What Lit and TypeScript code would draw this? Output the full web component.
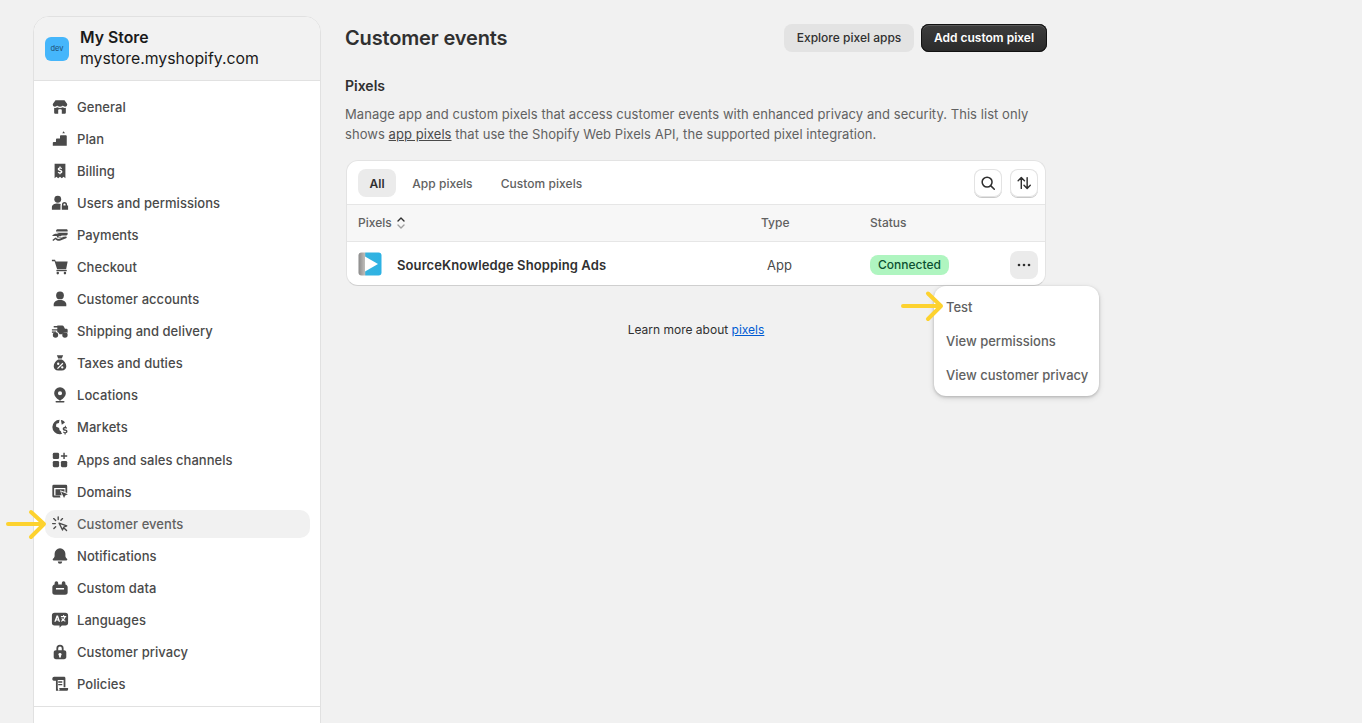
import { LitElement, html, css, svg } from "lit";
import { customElement } from "lit/decorators.js";

const icons: Record<string, any> = {
  General: svg`<path d="M5 2.500h10l3 4.200c.3 1.600-.8 3-2.400 3-1 0-1.900-.5-2.400-1.300-.5.8-1.300 1.300-3.200 1.300s-2.700-.5-3.200-1.300c-.5.8-1.400 1.300-2.400 1.300-1.600 0-2.700-1.400-2.400-3z"/><path fill-rule="evenodd" d="M3.500 10.800c1.200.4 2.500.2 3.300-.4 1.800 1 4.600 1 6.400 0 .8.6 2.100.8 3.300.4V16c0 .9-.6 1.500-1.500 1.500H5c-.9 0-1.500-.6-1.500-1.500zm4.500 2.700v4h4v-4c0-.6-.4-1-1-1H9c-.6 0-1 .4-1 1z"/>`,
  Plan: svg`<path d="M14 1.500l1.500 2h-3zM2 17.500v-3.300c0-.6.4-1 1-1h2.500v-2.700c0-.6.4-1 1-1h3.500V6.800c0-.6.4-1 1-1h5.500c.6 0 1 .4 1 1V17.500z"/>`,
  Billing: svg`<path fill-rule="evenodd" d="M4 2h12v16l-2-1.500-2 1.500-2-1.500L8 18l-2-1.500L4 18zM9.300 5v1c-1 .2-1.800.9-1.800 1.900 0 1.100.9 1.700 2.100 2 1 .2 1.300.5 1.300.9s-.5.7-1.100.7c-.7 0-1.200-.3-1.500-.7l-.9.800c.4.600 1.100 1 1.900 1.100v1h1.400v-1c1.100-.2 1.900-.9 1.900-2 0-1.200-1-1.800-2.300-2.100-.9-.2-1.100-.4-1.100-.7 0-.4.400-.6 1-.6.5 0 1 .2 1.300.6l.9-.8c-.4-.5-1-.9-1.700-1V5z"/>`,
  "Users and permissions": svg`<circle cx="7.500" cy="5.800" r="3.800"/><path d="M1 17.500v-2.500c0-3 2.500-4.500 6.500-4.500 1.300 0 2.400.2 3.300.6-.2.500-.3.900-.3 1.400v5z"/><path fill-rule="evenodd" d="M15 9a2.800 2.800 0 0 0-2.800 2.800v1H12v4.700h7v-4.700h-1.200v-1A2.800 2.800 0 0 0 15 9zm-1.200 3.800v-1a1.200 1.200 0 0 1 2.400 0v1z"/>`,
  Payments: svg`<path d="M7 3.500h10c.8 0 1.500.6 1.500 1.300V6H5.500c.1-1.300.6-2.500 1.500-2.500zM6 7.500h12.500v1.500c0 .8-.6 1.500-1.500 1.500h-5zM1.500 10.500c1.200-1.300 3-2 5-1.800l4.500.6c1.300.2 1.300 2-.2 2H8.500v1h3.500l4.500-.5c1.300 0 1.400 1.500.3 1.900l-6.300 2.400c-1.500.5-3 .4-4.200-.4l-1.300-.9-2.500 2-1-1.200 3.500-2.800 1.700 1.200c.8.5 1.600.6 2.600.3l4.500-1.700-3.800.3H6.500v-1.700H1.500z"/>`,
  Checkout: svg`<path d="M1 2h3.500l.8 2h13.200l-1.700 8.500H6.800L4 3.500H1z"/><path d="M6 13.200h11.500v1.500H6z"/><circle cx="7.500" cy="16.800" r="1.400"/><circle cx="15.500" cy="16.800" r="1.400"/>`,
  "Customer accounts": svg`<circle cx="10" cy="6" r="4.300"/><path d="M3 18v-2c0-3 2.800-5 7-5s7 2 7 5v2z"/>`,
  "Shipping and delivery": svg`<path d="M7 4h5.500c.8 0 1.400.4 1.700 1l1.300 2.500h1.500c.9 0 1.500.6 1.500 1.500V12a4 4 0 0 0-5.900 1.500H9.400A4 4 0 0 0 7 11.100V9.500H1V8h6V6H3V4.500h4z"/><circle cx="5" cy="14.500" r="3"/><circle cx="15.500" cy="14.500" r="3"/><path d="M1 10.500h4.500V12H1z"/>`,
  "Taxes and duties": svg`<path fill-rule="evenodd" d="M6.500 1.500h7L12 5H8zM8 6h4c3 1.800 5 4.500 5 7.500 0 2.800-2 4.700-5 4.700H8c-3 0-5-1.900-5-4.700C3 10.500 5 7.800 8 6zm4.700 3.800-6 6 1 1 6-6zM8 9.500a1.300 1.300 0 1 0 0 2.600 1.300 1.300 0 0 0 0-2.600zm4.500 4a1.300 1.300 0 1 0 0 2.600 1.300 1.300 0 0 0 0-2.600z"/>`,
  Locations: svg`<path fill-rule="evenodd" d="M10 1.500a6.500 6.500 0 0 0-6.500 6.500c0 3 2.500 5.800 5.500 7.500v.5h2v-.5c3-1.700 5.500-4.500 5.500-7.500A6.500 6.500 0 0 0 10 1.500zm0 4.200a2.300 2.300 0 1 1 0 4.600 2.300 2.300 0 0 1 0-4.600z"/><rect x="5" y="16.700" width="10" height="1.600" rx=".8"/>`,
  Markets: svg`<path d="M9.500 2a8 8 0 0 0-8 8 8 8 0 0 0 8.700 8c.9 0 1.600-.2 2.300-.4-.8-.6-1.300-1.600-1.300-2.600l-1.700-1.500-.5-2.500-3.500-1.500L6 6.500l2.800-1 .7-3.500zM11 2.200c2 .3 3.500 1.300 4.500 2.800L12 7.500z"/><path d="M15.500 8.500v1.300c-1.500.2-2.500 1.100-2.500 2.300 0 1.300 1.100 1.900 2.400 2.200 1 .2 1.300.5 1.300.8 0 .4-.5.600-1.100.6-.7 0-1.200-.3-1.500-.7l-.9.900c.4.500 1 .9 1.800 1v1.300h1.300v-1.300c1.200-.2 2-1 2-2 0-1.300-1.100-1.900-2.300-2.100-1-.2-1.300-.5-1.300-.8 0-.4.400-.6 1-.6s1 .2 1.300.6l.9-.9a3 3 0 0 0-1.400-1V8.500z"/>`,
  "Apps and sales channels": svg`<rect x="2" y="2" width="7" height="7" rx="1.500"/><rect x="2" y="11" width="7" height="7" rx="1.500"/><rect x="11" y="11" width="7" height="7" rx="1.500"/><path d="M13.700 2h1.600v2.700H18v1.600h-2.700V9h-1.600V6.300H11V4.700h2.700z"/>`,
  Domains: svg`<path d="M3 2h13.500A1.500 1.500 0 0 1 18 3.500V11l-2-.8V5.500H3.500V14h6.300l.7 2H3a1.500 1.500 0 0 1-1.500-1.500v-11A1.500 1.500 0 0 1 3 2z"/><path d="M5 7h10v2.800l-5-1.800 1.900 5.500H5z"/><path d="M11 9.500l7.800 3-3 1.300-1.300 3z"/>`,
  "Customer events": svg`<path fill="none" stroke="currentColor" stroke-width="1.500" stroke-linecap="round" stroke-linejoin="round" d="M8 2v3M3 4l2.200 2.200M1.800 9.500h3M3.200 15l2-2M12.800 4l-1.800 1.800M9 9l8.500 3-3.300 1.400-1.400 3.300zM15 15l2.300 2.300"/>`,
  Notifications: svg`<path d="M10 1.500a6 6 0 0 0-6 6V10c0 1.300-.8 2.400-1.800 3.100-.6.500-.4 1.900.8 1.900h14c1.200 0 1.400-1.400.8-1.900-1-.7-1.800-1.800-1.800-3.100V7.500a6 6 0 0 0-6-6z"/><path d="M7.500 16h5a2.500 2.500 0 0 1-5 0z"/>`,
  "Custom data": svg`<path fill-rule="evenodd" d="M4 4.500a2 2 0 0 1 4 0V6h4V4.500a2 2 0 0 1 4 0V6c1.400.2 2.500 1.400 2.500 3v6c0 1.700-1.300 2.500-2.800 2.500H4.300c-1.500 0-2.800-.8-2.800-2.500V9c0-1.600 1.100-2.800 2.500-3zM5.500 10v1.800h9V10z"/>`,
  Languages: svg`<path fill-rule="evenodd" d="M4 2h12a3 3 0 0 1 3 3v8a3 3 0 0 1-3 3h-4l-2.500 2.500V16H4a3 3 0 0 1-3-3V5a3 3 0 0 1 3-3zm2.200 3L3.700 12h1.500l.5-1.400h2.400l.5 1.400h1.500L7.800 5zm.7 2.200.7 2.200H6.300zM13.500 4.500v1H11V7h3.600c-.2.700-.6 1.400-1.100 2-.3-.3-.5-.7-.7-1h-1.300c.3.700.7 1.300 1.100 1.900-.5.400-1 .7-1.600.9l.5 1.200c.8-.3 1.500-.7 2.100-1.200.6.500 1.300.9 2.100 1.200l.5-1.200c-.6-.2-1.100-.5-1.700-.9.700-.9 1.200-1.900 1.500-2.900h.9V5.500h-2.300v-1z"/>`,
  "Customer privacy": svg`<path fill-rule="evenodd" d="M6 8V6a4 4 0 0 1 8 0v2h.5C16 8 17 9 17 10.500v5c0 1.400-1 2.500-2.500 2.500h-9C4 18 3 16.900 3 15.500v-5C3 9 4 8 5.500 8zm2-2v2h4V6a2 2 0 0 0-4 0zm2 5a1.800 1.800 0 0 0-1 3.300V16h2v-1.700A1.800 1.800 0 0 0 10 11z"/>`,
  Policies: svg`<path fill-rule="evenodd" d="M3.500 2h11c.8 0 1.500.7 1.500 1.500v10h-2V5.500H7.500V15c0 .9.400 1.600 1 2.500H5.500V6.500H3A2 2 0 0 1 1.500 4c0-1 .9-2 2-2zM8 7h4.500v1.500H8zM8 10h4.500v1.500H8z"/><path d="M9 14.500h10v1.200c0 1-.8 1.800-1.800 1.800H8.800c.5-.4.800-1 .8-1.700z"/>`,
};

const NAV = Object.keys(icons);

@customElement("app-root")
export class AppRoot extends LitElement {
  static styles = css`
    :host {
      display: block;
      width: 1362px;
      height: 723px;
      overflow: hidden;
      background: #f1f1f1;
      font-family: Inter, "Liberation Sans", sans-serif;
      font-size: 13px;
      color: #303030;
      position: relative;
    }
    .page { display: flex; align-items: flex-start; padding: 16px 0 0 33px; height: 707px; }
    .side {
      width: 288px; height: 720px; flex: none; box-sizing: border-box;
      background: #fff; border: 1px solid #e1e1e1; border-radius: 16px 16px 0 0;
      overflow: hidden; display: flex; flex-direction: column;
    }
    .store {
      height: 64px; box-sizing: border-box; background: #f2f2f2; border-bottom: 1px solid #e1e1e1;
      display: flex; align-items: center; gap: 11px; padding: 0 0 0 11px; flex: none;
    }
    .dev {
      width: 24px; height: 24px; border-radius: 6px; background: #45b6fb; color: #1e4f74;
      display: flex; align-items: center; justify-content: center; font-size: 7.500px;
    }
    .store-text { font-size: 15.800px; line-height: 21px; color: #1a1a1a; margin-top: -1px; }
    .store-text b { display: block; font-weight: 600; font-size: 15.800px; }
    nav { padding: 10px 11px 0; display: flex; flex-direction: column; flex: none; }
    .item {
      height: 32px; display: flex; align-items: center; gap: 8px; padding-left: 6px; width: 265px;
      box-sizing: border-box; color: #4a4a4a; font-weight: 500; font-size: 13px; border-radius: 10px;
      letter-spacing: .05px;
    }
    .item:nth-child(12) { margin-top: 1px; }
    .item svg { width: 18px; height: 18px; flex: none; fill: #4a4a4a; color: #4a4a4a; }
    .item.active { height: 28px; margin: 2px 0; background: #f1f1f1; color: #616161; }
    .foot { margin-top: 6px; border-top: 1px solid #e1e1e1; }
    main { width: 702px; margin-left: 24px; flex: none; position: relative; }
    .top { display: flex; align-items: center; height: 28px; padding-top: 8px; }
    h1 { font-size: 20px; font-weight: 600; margin: 0; flex: 1; color: #303030; letter-spacing: -.15px; }
    .btn {
      height: 28px; box-sizing: border-box; border-radius: 8px; display: flex; align-items: center;
      justify-content: center; font-size: 12px; font-weight: 500; padding-bottom: 1px;
    }
    .explore { width: 130px; background: #e3e3e3; color: #303030; }
    .add {
      width: 126px; margin-left: 7px; background: linear-gradient(#3d3d3d, #2a2a2a); color: #fff; font-weight: 600;
      box-shadow: inset 0 0 0 1px #111, inset 0 1px 0 1px #5a5a5a;
    }
    h2 { font-size: 14px; font-weight: 600; margin: 24px 0 0; line-height: 20px; color: #303030; }
    .desc { margin: 8px 0 0; font-size: 13px; line-height: 20px; color: #616161; width: 690px; letter-spacing: .055px; }
    .desc u { color: #4a4a4a; }
    .card {
      margin: 16px 0 0 1px; width: 700px; box-sizing: border-box; background: #fff; border-radius: 12px;
      border: 1px solid #e3e3e3; border-bottom-color: #cfcfcf; overflow: hidden; height: 126px;
    }
    .tabs { height: 43px; box-sizing: content-box; display: flex; align-items: center; padding: 0 7px 0 11px; border-bottom: 1px solid #e6e6e6; }
    .tab { height: 28px; display: flex; align-items: center; border-radius: 8px; font-size: 12px; font-weight: 500; color: #616161; letter-spacing: .05px; padding: 1px 12px 0 4px; box-sizing: border-box; margin-right: 12px; }
    .tab.on { background: #ebebeb; color: #303030; font-weight: 600; padding: 1px 11.500px 0; margin-right: 12px; }
    .spacer { flex: 1; }
    .ib {
      width: 28px; height: 28px; box-sizing: border-box; border-radius: 8px; background: #fff;
      box-shadow: inset 0 0 0 1px #e3e3e3, 0 1px 0 0 #c8c8c8; display: flex; align-items: center; justify-content: center; margin-left: 8px;
    }
    .ib svg { width: 18px; height: 18px; }
    .head, .row { display: grid; align-items: center; }
    .head {
      grid-template-columns: 403px 109px 1fr;
      height: 35px; padding-bottom: 1px; background: #f7f7f7; border-bottom: 1px solid #e6e6e6; padding-left: 11px;
      font-size: 12px; font-weight: 500; color: #616161;
    }
    .head .p { display: flex; align-items: center; gap: 3px; }
    .head svg { width: 12px; height: 16px; }
    .row { height: 44px; padding-left: 11px; grid-template-columns: 409px 103px 1fr; }
    .name { display: flex; align-items: center; gap: 15px; font-weight: 600; color: #303030; font-size: 13px; letter-spacing: .1px; }
    .name span, .type { padding-top: 2px; }
    .logo { width: 24px; height: 24px; flex: none; }
    .type { color: #4a4a4a; }
    .badge {
      display: inline-flex; align-items: center; height: 20px; padding: 0 8px; border-radius: 8px;
      background: #aff5c0; color: #0c5132; font-size: 12px; font-weight: 500; margin-top: 1px;
    }
    .st { display: flex; align-items: center; justify-content: space-between; padding-right: 7px; }
    .more { width: 28px; height: 28px; border-radius: 8px; background: #ebebeb; display: flex; align-items: center; justify-content: center; margin-top: 1px; }
    .more svg { width: 16px; height: 16px; }
    .learn { margin-top: 35px; text-align: center; font-size: 12px; line-height: 18px; color: #303030; }
    .learn a { color: #005bd3; text-decoration: underline; }
    .menu {
      position: absolute; left: 589px; top: 270px; width: 165px; height: 110px; box-sizing: border-box;
      background: #fff; border-radius: 12px; padding: 4px 12px;
      box-shadow: 0 1px 3px rgba(0,0,0,.2), 0 2px 6px rgba(0,0,0,.12);
      display: flex; flex-direction: column; color: #616161; font-weight: 500; font-size: 13px;
    }
    .menu div { height: 34px; display: flex; align-items: center; white-space: nowrap; }
    .arrow { position: absolute; fill: none; stroke: #fdd22f; stroke-width: 4; stroke-linecap: round; stroke-linejoin: round; }
    .a1 { left: 5px; top: 509px; width: 42px; height: 32px; }
    .a2 { left: 900px; top: 290px; width: 45px; height: 32px; }
  `;

  render() {
    return html`
      <div class="page">
        <aside class="side">
          <div class="store">
            <div class="dev">dev</div>
            <div class="store-text"><b>My Store</b>mystore.myshopify.com</div>
          </div>
          <nav>
            ${NAV.map(
              (n) => html`<div class="item ${n === "Customer events" ? "active" : ""}">
                <svg viewBox="0 0 20 20">${icons[n]}</svg><span>${n}</span>
              </div>`
            )}
          </nav>
          <div class="foot"></div>
        </aside>
        <main>
          <div class="top">
            <h1>Customer events</h1>
            <div class="btn explore">Explore pixel apps</div>
            <div class="btn add">Add custom pixel</div>
          </div>
          <h2>Pixels</h2>
          <p class="desc">Manage app and custom pixels that access customer events with enhanced privacy and security. This list only shows <u>app pixels</u> that use the Shopify Web Pixels API, the supported pixel integration.</p>
          <div class="card">
            <div class="tabs">
              <div class="tab on">All</div>
              <div class="tab">App pixels</div>
              <div class="tab">Custom pixels</div>
              <div class="spacer"></div>
              <div class="ib"><svg viewBox="0 0 20 20" fill="none" stroke="#303030" stroke-width="1.700" stroke-linecap="round"><circle cx="9" cy="9" r="5.500"/><path d="M13.200 13.200 17 17"/></svg></div>
              <div class="ib"><svg viewBox="0 0 20 20" fill="none" stroke="#303030" stroke-width="1.600" stroke-linecap="round" stroke-linejoin="round"><path d="M7 16V4M3.500 7.500 7 4l3.500 3.500M13.500 4v12M10 12.500l3.500 3.500 3.500-3.500"/></svg></div>
            </div>
            <div class="head">
              <div class="p">Pixels <svg viewBox="0 0 12 16" fill="none" stroke-linecap="round" stroke-linejoin="round" stroke-width="1.400"><path d="M3 6l3-3 3 3" stroke="#303030"/><path d="M3 10l3 3 3-3" stroke="#a0a0a0"/></svg></div>
              <div>Type</div>
              <div>Status</div>
            </div>
            <div class="row">
              <div class="name">
                <svg class="logo" viewBox="0 0 24 24">
                  <defs>
                    <linearGradient id="lg" x1="0" x2="1" y1="0" y2="0"><stop offset="0" stop-color="#8a8a8a"/><stop offset=".26" stop-color="#bdbab7"/><stop offset=".32" stop-color="#35b3df"/><stop offset="1" stop-color="#2db2e4"/></linearGradient>
                  </defs>
                  <rect x="0.500" y="0.500" width="23" height="23" rx="3" fill="url(#lg)"/>
                  <path d="M7 4.500 20 12 7 19.500z" fill="#fff"/>
                </svg>
                <span>SourceKnowledge Shopping Ads</span>
              </div>
              <div class="type">App</div>
              <div class="st"><span class="badge">Connected</span>
                <div class="more"><svg viewBox="0 0 16 16" fill="#303030"><circle cx="3" cy="8" r="1.300"/><circle cx="8" cy="8" r="1.300"/><circle cx="13" cy="8" r="1.300"/></svg></div>
              </div>
            </div>
          </div>
          <div class="learn">Learn more about <a>pixels</a></div>
          <div class="menu">
            <div>Test</div>
            <div>View permissions</div>
            <div>View customer privacy</div>
          </div>
        </main>
      </div>
      <svg class="arrow a1" viewBox="0 0 42 32"><path d="M3 15H38.500M26 3l13 12-13 13"/></svg>
      <svg class="arrow a2" viewBox="0 0 45 32"><path d="M3 16H41M28 3.500 41 16 28 29"/></svg>
    `;
  }
}
